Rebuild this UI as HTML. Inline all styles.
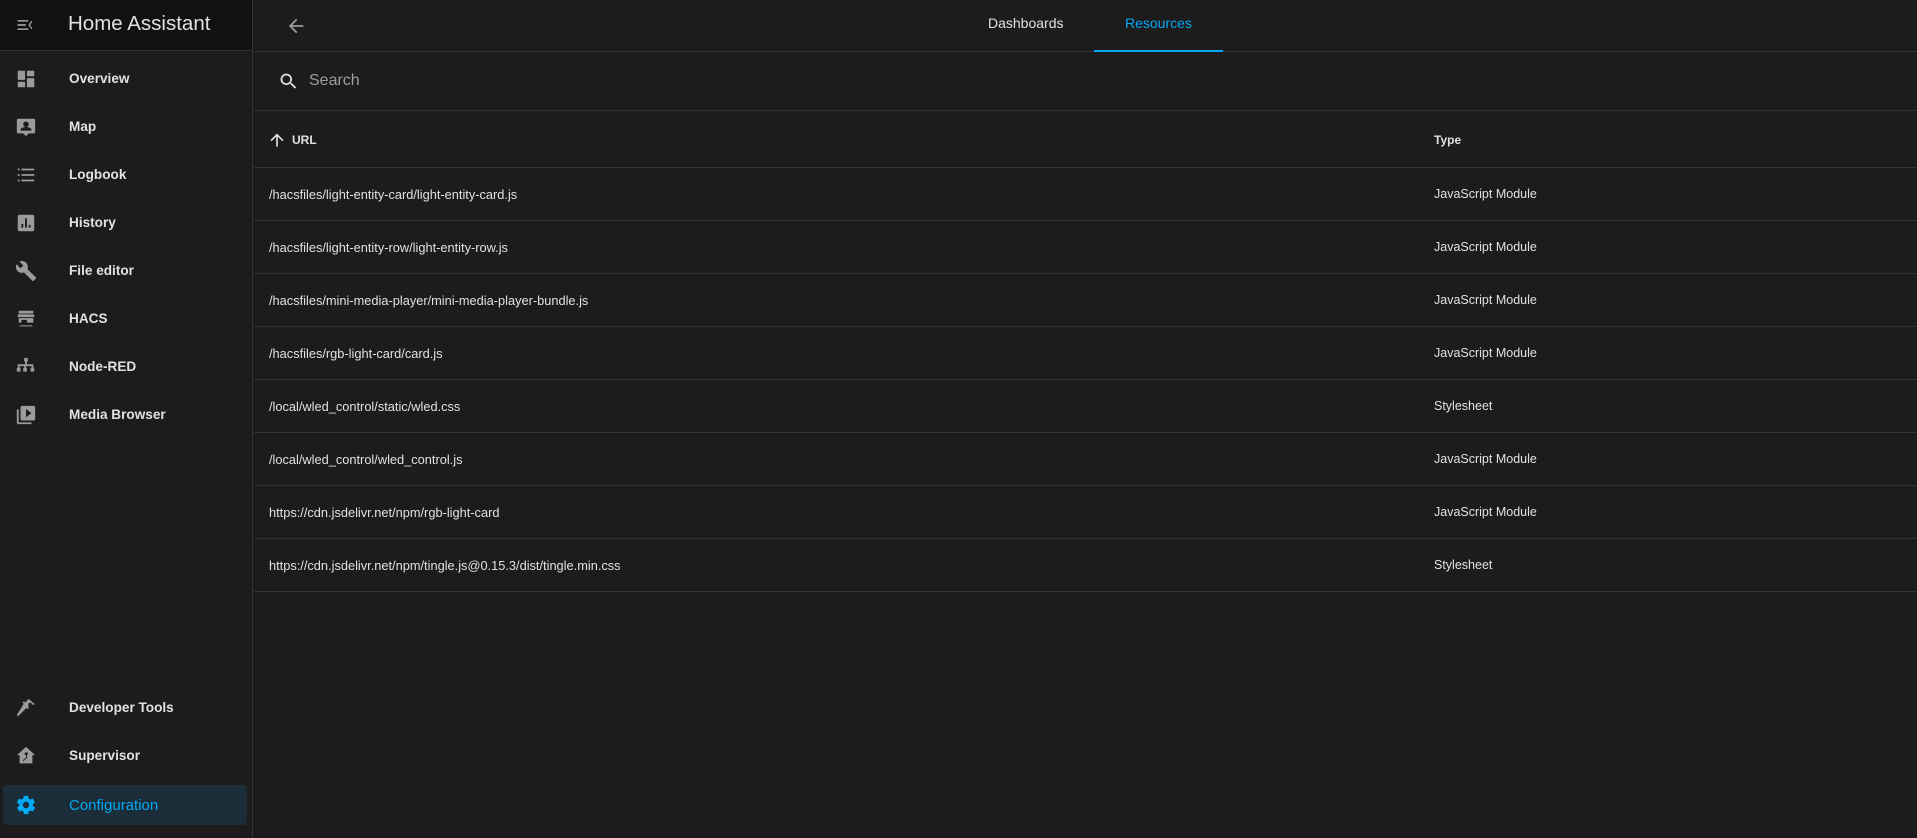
<!DOCTYPE html>
<html><head><meta charset="utf-8"><style>
*{box-sizing:border-box;margin:0;padding:0}
body{width:1917px;height:838px;background:#1c1c1c;font-family:"Liberation Sans",Arial,sans-serif;color:#e1e1e1;overflow:hidden;position:relative}
#side{position:absolute;left:0;top:0;width:253px;height:838px;background:#1c1c1c;border-right:1px solid #333}
#shead{height:51px;background:#111;border-bottom:1px solid #333;position:relative}
#shead .t{position:absolute;left:68px;top:12px;font-size:20.5px;color:#e1e1e1}
.item{position:absolute;left:0;width:253px;height:40px}
.item svg{position:absolute;left:15px;top:9px;width:22px;height:22px;fill:#9b9b9b}
.item span{position:absolute;left:69px;top:12px;font-size:13.6px;font-weight:bold;color:#e1e1e1}
.sel{left:3px;width:244px;background:#1a2d38;border-radius:4px}
.sel svg{left:12px;fill:#03a9f4}.sel span{left:66px;color:#03a9f4;font-weight:normal;font-size:15px}
#main{position:absolute;left:254px;top:0;right:0;height:838px}
#top{height:52px;border-bottom:1px solid #333;position:relative}
.tab{position:absolute;top:15px;font-size:14px}
#search{height:59px;border-bottom:1px solid #333;position:relative}
#search span{position:absolute;left:55px;top:20px;font-size:16px;color:#9e9e9e}
.row{height:53px;border-bottom:1px solid #333;position:relative;font-size:12.5px}
.row .u{position:absolute;left:15px;top:19px;font-size:12.8px}
.row .ty{position:absolute;left:1180px;top:19px}
.hdr{height:57px;font-weight:bold;font-size:12px}
.hdr .u{left:38px;top:22px;font-size:12px}.hdr .ty{top:22px}
</style></head><body>
<div id="side">
<div id="shead">
<svg style="position:absolute;left:15px;top:15px" width="20" height="20" viewBox="0 0 24 24" fill="#9b9b9b"><path d="M3 6h13v2H3zM3 11h10v2H3zM3 16h13v2H3zM21 8l-3 4 3 4-1.4 1L16 12l3.6-5z"/></svg>
<div class="t">Home Assistant</div></div>
<div class="item" style="top:59px"><svg viewBox="0 0 24 24"><path d="M13 3v6h8V3m-8 18h8V11h-8M3 21h8v-6H3m0-2h8V3H3v10z"/></svg><span>Overview</span></div>
<div class="item" style="top:107px"><svg viewBox="0 0 24 24"><path d="M4 3h16a2 2 0 012 2v12a2 2 0 01-2 2h-5l-3 3-3-3H4a2 2 0 01-2-2V5a2 2 0 012-2m8 3a3 3 0 100 6 3 3 0 000-6m-6 10h12v-1c0-2-4-3-6-3s-6 1-6 3z"/></svg><span>Map</span></div>
<div class="item" style="top:155px"><svg viewBox="0 0 24 24"><path d="M7 5h14v2H7zm0 6h14v2H7zm0 6h14v2H7zM3 5h2v2H3zm0 6h2v2H3zm0 6h2v2H3z"/></svg><span>Logbook</span></div>
<div class="item" style="top:203px"><svg viewBox="0 0 24 24"><path d="M5 3h14a2 2 0 012 2v14a2 2 0 01-2 2H5a2 2 0 01-2-2V5a2 2 0 012-2m2 10v4h2v-4zm4-6v10h2V7zm4 7v3h2v-3z"/></svg><span>History</span></div>
<div class="item" style="top:251px"><svg viewBox="0 0 24 24"><path d="M22.7 19l-9.1-9.1c.9-2.3.4-5-1.5-6.9-2-2-5-2.4-7.4-1.3L9 6 6 9 1.6 4.7C.4 7.1.9 10.1 2.9 12.1c1.9 1.9 4.6 2.4 6.9 1.5l9.1 9.1c.4.4 1 .4 1.4 0l2.3-2.3c.5-.4.5-1.1.1-1.4z"/></svg><span>File editor</span></div>
<div class="item" style="top:299px"><svg viewBox="0 0 24 24"><path d="M4 3h16v3H4zM3 7h18v3H3zM4 11h16v5H4zm3 2v3h6v-3zM5 19h14v1H5z"/></svg><span>HACS</span></div>
<div class="item" style="top:347px"><svg viewBox="0 0 24 24"><path d="M10 2h4v4h-1v3h7v4h1v4h-4v-4h1v-2h-6v2h1v4h-4v-4h1v-2H5v2h1v4H2v-4h1V9h8V6h-1z"/></svg><span>Node-RED</span></div>
<div class="item" style="top:395px"><svg viewBox="0 0 24 24"><path d="M4 6H2v14a2 2 0 002 2h14v-2H4zm16-4H8a2 2 0 00-2 2v12a2 2 0 002 2h12a2 2 0 002-2V4a2 2 0 00-2-2m-8 12.5v-9l6 4.5z"/></svg><span>Media Browser</span></div>
<div class="item" style="top:688px"><svg viewBox="0 0 24 24"><path d="M2 19.6l1.4 1.4 9.2-9.2 1.4 1.4 1.4-1.4-1.4-1.4 1.4-1.4-1.4-1.4L17 6l3 3 1.4-1.4L15 2 13.6 3.4 11 6 9.6 4.6 8.2 6l1.4 1.4z"/></svg><span>Developer Tools</span></div>
<div class="item" style="top:736px"><svg viewBox="0 0 24 24"><path d="M12 2l10 9h-3v9H5v-9H2zm0 6a1.5 1.5 0 100 3v3l-3 2v2h1v-1.5l3-2v-3.5A1.5 1.5 0 0012 8z"/></svg><span>Supervisor</span></div>
<div class="item sel" style="top:785px"><svg viewBox="0 0 24 24"><path d="M12 15.5A3.5 3.5 0 1112 8.5a3.5 3.5 0 010 7m7.4-2.5c.1-.3.1-.7.1-1s0-.7-.1-1l2.1-1.6c.2-.2.3-.4.1-.6l-2-3.5c-.1-.2-.4-.3-.6-.2l-2.5 1c-.5-.4-1.1-.7-1.7-1l-.4-2.6c0-.2-.3-.4-.5-.4h-4c-.2 0-.5.2-.5.4l-.4 2.6c-.6.3-1.2.6-1.7 1l-2.5-1c-.2-.1-.5 0-.6.2l-2 3.5c-.1.2 0 .5.1.6L4.6 11c0 .3-.1.7-.1 1s0 .7.1 1l-2.1 1.7c-.2.1-.3.4-.1.6l2 3.5c.1.2.4.3.6.2l2.5-1c.5.4 1.1.7 1.7 1l.4 2.6c0 .2.3.4.5.4h4c.2 0 .5-.2.5-.4l.4-2.6c.6-.3 1.2-.6 1.7-1l2.5 1c.2.1.5 0 .6-.2l2-3.5c.1-.2.1-.5-.1-.6z"/></svg><span>Configuration</span></div>
</div>
<div id="main">
<div id="top">
<svg style="position:absolute;left:31px;top:15px" width="22" height="22" viewBox="0 0 24 24" fill="#9b9b9b"><path d="M20 11v2H8l5.5 5.5-1.4 1.4L4.2 12l7.9-7.9 1.4 1.4L8 11z"/></svg>
<div class="tab" style="left:734px">Dashboards</div>
<div class="tab" style="left:871px;color:#03a9f4">Resources</div>
<div style="position:absolute;left:840px;width:129px;bottom:-1px;height:2px;background:#03a9f4"></div>
</div>
<div id="search"><svg style="position:absolute;left:24px;top:19px" width="21" height="21" viewBox="0 0 24 24" fill="#e1e1e1"><path d="M9.5 3a6.5 6.5 0 015.2 10.4l.3.3h.8l5 5-1.5 1.5-5-5v-.8l-.3-.3A6.5 6.5 0 119.5 3m0 2a4.5 4.5 0 100 9 4.5 4.5 0 000-9z"/></svg><span>Search</span></div>
<div class="row hdr"><svg style="position:absolute;left:13px;top:19px" width="20" height="20" viewBox="0 0 24 24" fill="#e1e1e1"><path d="M13 20h-2V8l-5.5 5.5-1.4-1.4L12 4.2l7.9 7.9-1.4 1.4L13 8z"/></svg><span class="u">URL</span><span class="ty">Type</span></div>
<div class="row"><span class="u">/hacsfiles/light-entity-card/light-entity-card.js</span><span class="ty">JavaScript Module</span></div>
<div class="row"><span class="u">/hacsfiles/light-entity-row/light-entity-row.js</span><span class="ty">JavaScript Module</span></div>
<div class="row"><span class="u">/hacsfiles/mini-media-player/mini-media-player-bundle.js</span><span class="ty">JavaScript Module</span></div>
<div class="row"><span class="u">/hacsfiles/rgb-light-card/card.js</span><span class="ty">JavaScript Module</span></div>
<div class="row"><span class="u">/local/wled_control/static/wled.css</span><span class="ty">Stylesheet</span></div>
<div class="row"><span class="u">/local/wled_control/wled_control.js</span><span class="ty">JavaScript Module</span></div>
<div class="row"><span class="u">https://cdn.jsdelivr.net/npm/rgb-light-card</span><span class="ty">JavaScript Module</span></div>
<div class="row"><span class="u">https://cdn.jsdelivr.net/npm/tingle.js@0.15.3/dist/tingle.min.css</span><span class="ty">Stylesheet</span></div>
</div>
</body></html>
